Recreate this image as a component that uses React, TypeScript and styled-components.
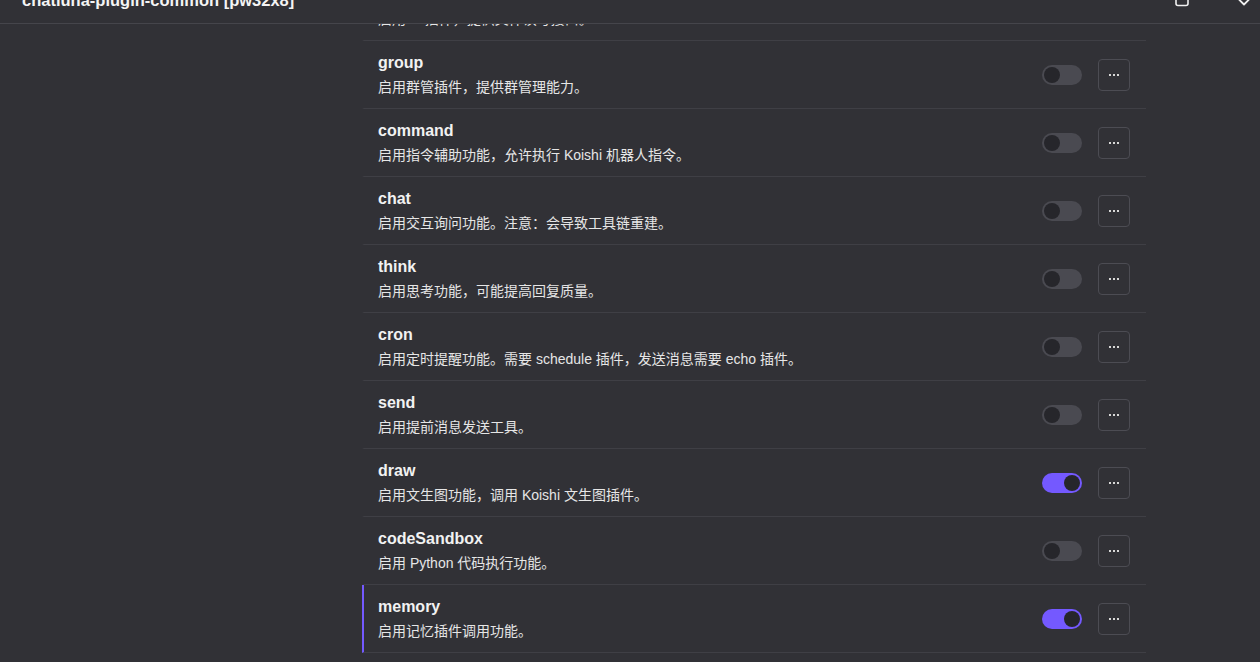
import styled, { createGlobalStyle } from "styled-components";

const GlobalStyle = createGlobalStyle`
    html, body {
        margin: 0;
        padding: 0;
        height: 100%;
        background: #313136;
    }
    body {
        font-family: "Liberation Sans", "Noto Sans CJK SC", sans-serif;
        color: #f0f0f0;
    }
`

type OptionType = {
    name: string
    desc: string
    enabled: boolean
    active?: boolean
}

const options: OptionType[] = [
    { name: "fs", desc: "启用 fs 插件，提供文件读写接口。", enabled: false },
    { name: "group", desc: "启用群管插件，提供群管理能力。", enabled: false },
    { name: "command", desc: "启用指令辅助功能，允许执行 Koishi 机器人指令。", enabled: false },
    { name: "chat", desc: "启用交互询问功能。注意：会导致工具链重建。", enabled: false },
    { name: "think", desc: "启用思考功能，可能提高回复质量。", enabled: false },
    { name: "cron", desc: "启用定时提醒功能。需要 schedule 插件，发送消息需要 echo 插件。", enabled: false },
    { name: "send", desc: "启用提前消息发送工具。", enabled: false },
    { name: "draw", desc: "启用文生图功能，调用 Koishi 文生图插件。", enabled: true },
    { name: "codeSandbox", desc: "启用 Python 代码执行功能。", enabled: false },
    { name: "memory", desc: "启用记忆插件调用功能。", enabled: true, active: true },
]

type OptionRowProps = {
    option: OptionType
}

const OptionRow = (props: OptionRowProps) => {
    return (
        <Row $active={props.option.active}>
            <Info>
                <Title>{props.option.name}</Title>
                <Desc>{props.option.desc}</Desc>
            </Info>
            <Controls>
                <Switch $on={props.option.enabled}>
                    <Knob />
                </Switch>
                <MoreButton aria-label="more">
                    <svg width="12" height="4" viewBox="0 0 12 4">
                        <rect x="1" y="1" width="2" height="2" fill="#d6d6d6" />
                        <rect x="5" y="1" width="2" height="2" fill="#d6d6d6" />
                        <rect x="9" y="1" width="2" height="2" fill="#d6d6d6" />
                    </svg>
                </MoreButton>
            </Controls>
        </Row>
    );
};

export default function App() {
    return (
        <Page>
            <GlobalStyle />
            <Header>
                <HeaderTitle>chatluna-plugin-common [pw32x8]</HeaderTitle>
                <HeaderIcons>
                    <svg width="16" height="16" viewBox="0 0 16 16" fill="none">
                        <rect x="2" y="1" width="12" height="13.5" rx="2" stroke="#f0f0f0" strokeWidth="1.6" />
                    </svg>
                    <svg width="16" height="16" viewBox="0 0 16 16" fill="none">
                        <path d="M2 7.5 L8 13.5 L14 7.5" stroke="#f0f0f0" strokeWidth="1.8" strokeLinejoin="round" />
                    </svg>
                </HeaderIcons>
            </Header>
            <Viewport>
                <Body>
                    <Sidebar />
                    <List>
                        {options.map((o) => (
                            <OptionRow key={o.name} option={o} />
                        ))}
                    </List>
                </Body>
            </Viewport>
        </Page>
    );
}

const Page = styled.div`
    height: 100vh;
    display: flex;
    flex-direction: column;
    overflow: hidden;
    background: #313136;
`

const Header = styled.header`
    height: 23px;
    flex: none;
    border-bottom: 1px solid #45454b;
    display: flex;
    justify-content: space-between;
    padding: 0 8px 0 22px;
    overflow: hidden;
`

const HeaderTitle = styled.h1`
    margin: -10px 0 0;
    font-size: 16.5px;
    line-height: 20px;
    font-weight: 700;
    color: #f4f4f4;
    white-space: nowrap;
`

const HeaderIcons = styled.div`
    display: flex;
    gap: 46px;
    margin-top: -9px;
    height: 16px;
    align-items: flex-start;
`

const Viewport = styled.div`
    flex: 1;
    overflow: hidden;
`

const Body = styled.div`
    display: grid;
    grid-template-columns: 362px 784px;
    margin-top: -51px;
`

const Sidebar = styled.aside``

const List = styled.div`
    display: flex;
    flex-direction: column;
`

const Row = styled.div<{ $active?: boolean }>`
    display: flex;
    align-items: center;
    justify-content: space-between;
    padding: 10px 16px 10px 14px;
    border-left: 2px solid ${(p) => (p.$active ? "#7459ff" : "transparent")};
    border-bottom: 1px solid #3f3f45;
`

const Info = styled.div`
    display: flex;
    flex-direction: column;
`

const Title = styled.div`
    font-size: 16px;
    line-height: 24px;
    font-weight: 700;
    color: #f2f2f2;
`

const Desc = styled.div`
    margin-top: 1px;
    font-size: 14px;
    line-height: 22px;
    color: #e6e6e6;
`

const Controls = styled.div`
    display: flex;
    align-items: center;
    gap: 16px;
`

const Switch = styled.div<{ $on: boolean }>`
    width: 40px;
    height: 20px;
    box-sizing: border-box;
    border-radius: 10px;
    padding: 2px;
    display: flex;
    justify-content: ${(p) => (p.$on ? "flex-end" : "flex-start")};
    background: ${(p) => (p.$on ? "#7459ff" : "#4a4a51")};
`

const Knob = styled.span`
    width: 16px;
    height: 16px;
    border-radius: 50%;
    background: #26262b;
`

const MoreButton = styled.button`
    width: 32px;
    height: 32px;
    box-sizing: border-box;
    border: 1px solid #4c4c53;
    border-radius: 4px;
    background: transparent;
    padding: 0;
    display: flex;
    align-items: center;
    justify-content: center;
    cursor: pointer;
`
